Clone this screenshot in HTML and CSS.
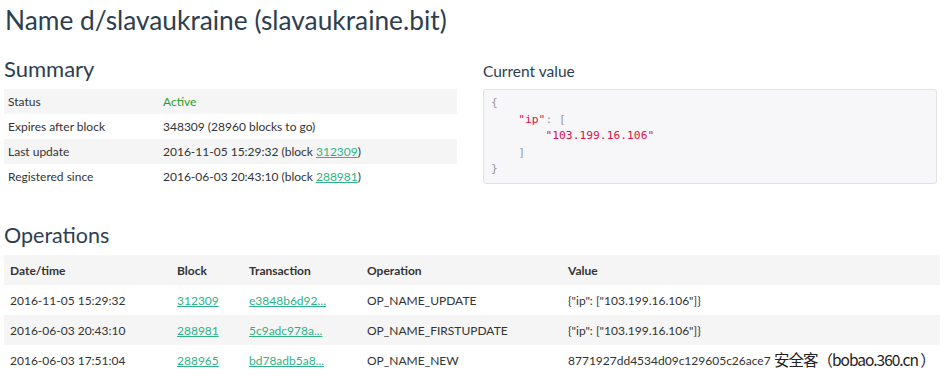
FILE: index.html
```html
<!DOCTYPE html>
<html lang="en">
<head>
    <meta charset="UTF-8">
    <title>Name d/slavaukraine</title>
    <link rel="stylesheet" href="styles.css">
</head>
<body>
    <h1 class="title">Name d/slavaukraine (slavaukraine.bit)</h1>

    <div class="columns">
        <div class="col">
            <h2 class="section">Summary</h2>
            <table class="summary">
                <tr><td class="label">Status</td><td class="active">Active</td></tr>
                <tr><td class="label">Expires after block</td><td>348309 (28960 blocks to go)</td></tr>
                <tr><td class="label">Last update</td><td>2016-11-05 15:29:32 (block <a href="#">312309</a>)</td></tr>
                <tr><td class="label">Registered since</td><td>2016-06-03 20:43:10 (block <a href="#">288981</a>)</td></tr>
            </table>
        </div>
        <div class="col">
            <h3 class="current">Current value</h3>
<pre class="value"><span class="pun">{</span>
    <span class="str">"ip"</span><span class="pun">: [</span>
        <span class="str">"103.199.16.106"</span>
    <span class="pun">]</span>
<span class="pun">}</span></pre>
        </div>
    </div>

    <h2 class="section ops-title">Operations</h2>
    <table class="ops">
        <thead>
            <tr><th class="c-date">Date/time</th><th class="c-block">Block</th><th class="c-tx">Transaction</th><th class="c-op">Operation</th><th>Value</th></tr>
        </thead>
        <tbody>
            <tr><td>2016-11-05 15:29:32</td><td><a href="#">312309</a></td><td><a href="#">e3848b6d92...</a></td><td>OP_NAME_UPDATE</td><td>{"ip": ["103.199.16.106"]}</td></tr>
            <tr><td>2016-06-03 20:43:10</td><td><a href="#">288981</a></td><td><a href="#">5c9adc978a...</a></td><td>OP_NAME_FIRSTUPDATE</td><td>{"ip": ["103.199.16.106"]}</td></tr>
            <tr><td>2016-06-03 17:51:04</td><td><a href="#">288965</a></td><td><a href="#">bd78adb5a8...</a></td><td>OP_NAME_NEW</td><td class="wm-cell">8771927dd4534d09c129605c26ace7<span class="watermark">安全客（bobao.360.cn ）</span></td></tr>
        </tbody>
    </table>
</body>
</html>
```

FILE: styles.css
```css
body {
    margin: 0;
    padding: 0 4px;
    font-family: Lato, "Noto Sans", sans-serif;
    font-size: 12px;
    color: #2c3e50;
    background: #fff;
}
a {
    color: #2fb386;
    text-decoration: underline;
}
.title {
    font-size: 26.3px;
    font-weight: 400;
    margin: 0;
    padding: 3px 0 0 1px;
    line-height: 34px;
}
.columns {
    display: grid;
    grid-template-columns: 453px 454px;
    column-gap: 26px;
    margin-top: 18px;
}
.section {
    font-size: 22px;
    font-weight: 400;
    margin: 0 0 6px;
    line-height: 28px;
}
.current {
    font-size: 15.5px;
    font-weight: 400;
    margin: 7px 0 8px;
    line-height: 19px;
}
.summary {
    width: 100%;
    border-collapse: collapse;
}
.summary td {
    height: 25px;
    padding: 0 4px;
    color: #333;
}
.summary tr:nth-child(odd) td { background: #f5f5f5; }
.summary .label { width: 147px; }
.summary .active { color: #2ca02c; }
.value {
    margin: 0;
    padding: 5px 7px;
    height: 83px;
    background: #f7f7f9;
    border: 1px solid #e1e1e8;
    border-radius: 3px;
    font-family: "DejaVu Sans Mono", monospace;
    font-size: 11.3px;
    line-height: 16.6px;
    color: #999;
}
.value .str { color: #d14; }
.ops-title {
    margin-top: 32px;
    font-size: 21.5px;
}
.ops {
    width: 936px;
    border-collapse: collapse;
    color: #333;
}
.ops th, .ops td {
    height: 30px;
    padding: 0 6px;
    text-align: left;
    white-space: nowrap;
}
.ops th { font-weight: 700; }
.ops thead tr, .ops tbody tr:nth-child(even) { background: #f5f5f5; }
.c-date { width: 155px; }
.c-block { width: 60px; }
.c-tx { width: 106px; }
.c-op { width: 189px; }
.wm-cell { position: relative; }
.watermark {
    position: absolute;
    left: 212px;
    top: 6px;
    color: #222;
    font-family: "Noto Sans CJK SC", sans-serif;
    font-size: 15.5px;
    line-height: 17px;
    letter-spacing: -1px;
    background: rgba(255,255,255,0.4);
}
```
